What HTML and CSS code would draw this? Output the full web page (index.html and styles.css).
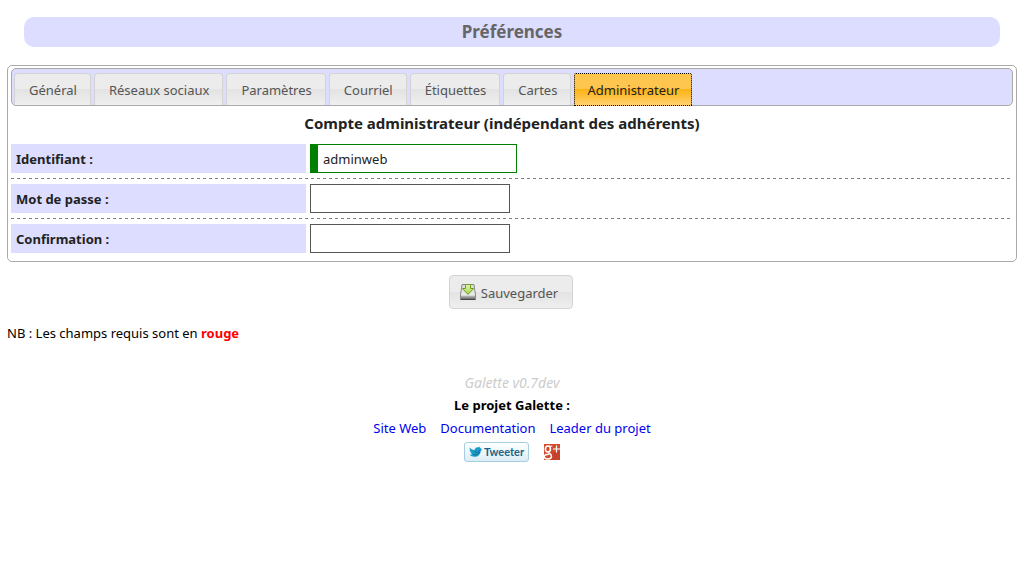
FILE: index.html
```html
<!DOCTYPE html>
<html lang="fr">
<head>
<meta charset="utf-8">
<title>Préférences</title>
<link rel="stylesheet" href="styles.css">
</head>
<body>
<h1 class="page-title">Préférences</h1>
<form class="prefs">
  <div class="panel">
    <div class="tabs" role="tablist">
      <button type="button" role="tab" class="tab">Général</button>
      <button type="button" role="tab" class="tab">Réseaux sociaux</button>
      <button type="button" role="tab" class="tab">Paramètres</button>
      <button type="button" role="tab" class="tab">Courriel</button>
      <button type="button" role="tab" class="tab">Étiquettes</button>
      <button type="button" role="tab" class="tab">Cartes</button>
      <button type="button" role="tab" class="tab tab-active" aria-selected="true">Administrateur</button>
    </div>
    <fieldset class="fields">
      <legend class="legend">Compte administrateur (indépendant des adhérents)</legend>
      <div class="row">
        <label class="label" for="login">Identifiant :</label>
        <input class="input input-valid" id="login" type="text" value="adminweb">
      </div>
      <div class="row">
        <label class="label" for="pass">Mot de passe :</label>
        <input class="input" id="pass" type="password">
      </div>
      <div class="row">
        <label class="label" for="confirm">Confirmation :</label>
        <input class="input" id="confirm" type="password">
      </div>
    </fieldset>
  </div>
  <div class="actions">
    <button type="submit" class="save">
      <svg width="16" height="16" viewBox="0 0 16 16" aria-hidden="true">
        <defs>
          <linearGradient id="disk" x1="0" y1="0" x2="0" y2="1"><stop offset="0" stop-color="#d8d8d6"/><stop offset="1" stop-color="#f4f4f2"/></linearGradient>
          <linearGradient id="front" x1="0" y1="0" x2="0" y2="1"><stop offset="0" stop-color="#c4c4c2"/><stop offset="1" stop-color="#6a6a68"/></linearGradient>
          <linearGradient id="arrow" x1="0" y1="0" x2="0" y2="1"><stop offset="0" stop-color="#e4f5b8"/><stop offset="1" stop-color="#a2d83c"/></linearGradient>
        </defs>
        <path d="M2 .5h12l1.500 10.500v4q0 .5-.5.500H1q-.5 0-.5-.5v-4z" fill="url(#disk)" stroke="#888a85"/>
        <path d="M1 11.500h14V15H1z" fill="url(#front)"/>
        <path d="M.5 15.500h15" stroke="#444643"/>
        <path d="M5.500.5h5v4h3L8 10.500 2.500 4.500h3z" fill="url(#arrow)" stroke="#6f9e22"/>
      </svg>
      <span>Sauvegarder</span>
    </button>
  </div>
</form>
<p class="note">NB : Les champs requis sont en <strong class="required">rouge</strong></p>
<footer class="footer">
  <p class="version">Galette v0.7dev</p>
  <p class="project">Le projet Galette :</p>
  <nav class="links">
    <a href="#site">Site Web</a>
    <a href="#doc">Documentation</a>
    <a href="#leader">Leader du projet</a>
  </nav>
  <div class="social">
    <a class="tweet" href="#tweet">
      <svg width="14" height="12" viewBox="0 0 14 12" aria-hidden="true">
        <path d="M.5 1.500C2 3 3.500 3.700 5.500 4 6 2 7.500.800 9.300 1.300l1.700-.8-.5 1.300 2 .2-1 1 2 .8-1.700.9C11.500 8.500 9 10.800 5.500 10.800 3.500 10.800 1.800 10 .5 8.800c1.200.1 2.200-.1 3-.7C2.300 7.700 1.600 7 1.300 6.200h1C1.200 5.500.5 4.600.5 3.700l1 .2C.6 3.200.3 2.300.5 1.500z" fill="#1c9bc9"/>
        <path d="M5.500 5.500c1.500 1.500 4.500 1 5.500-1.500M4 8.500c2.500 1 5.500.3 7-2.500" fill="none" stroke="#0f6f96"/>
      </svg>
      <span>Tweeter</span>
    </a>
    <a class="gplus" href="#gplus" aria-label="Google+">
      <svg width="16" height="16" viewBox="0 0 16 16" aria-hidden="true">
        <path d="M0 0h16v16H0z" fill="#d34b2d"/>
        <path d="M8 9l8-3v10H8z" fill="#c5402a"/>
        <path d="M8.300 2.200H4" stroke="#fff"/>
        <ellipse cx="3.900" cy="5" rx="2.500" ry="3" fill="none" stroke="#fff" stroke-width="1.600"/>
        <path d="M4.500 8.200c0 1.300 3 1.800 3 4.100 0 1.700-1.500 2.700-3.800 2.700S.2 14 .2 12.600C.2 11 2.200 10.200 5 10.200" fill="none" stroke="#fff" stroke-width="1.500"/>
        <path d="M12.500 1.500v7M9 5h7" stroke="#fff" stroke-width="1.200"/>
      </svg>
    </a>
  </div>
</footer>
</body>
</html>
```
FILE: styles.css
```css
* { box-sizing: border-box; }

body {
  margin: 0;
  padding: 17px 7px;
  background: #fff;
  color: #000;
  font: 13px/23px "Noto Sans", "Open Sans", sans-serif;
}

h1, p, fieldset, legend { margin: 0; padding: 0; border: 0; }
button, input { font: inherit; }

.page-title {
  margin: 0 17px 18px;
  border-radius: 10px;
  background: #ddf;
  color: #666;
  font-size: 17px;
  line-height: 30px;
  text-align: center;
}

.panel {
  padding: 2px 3px 8px;
  border: 1px solid #aaa;
  border-radius: 5px;
  color: #222;
}

.tabs {
  display: flex;
  gap: 3px;
  padding: 4px 2px 0;
  border: 1px solid #aaa;
  border-radius: 5px;
  background: #ddf;
}

.tab {
  height: 32px;
  padding: 2px 13px 0 14px;
  border: 1px solid #d3d3d3;
  border-bottom: 0;
  border-radius: 4px 4px 0 0;
  background: linear-gradient(#ececec 50%, #e3e3e3 50%, #efefef);
  color: #555;
  white-space: nowrap;
}

.tab-active {
  height: 33px;
  margin-bottom: -1px;
  padding: 1px 12px 0;
  border: 1px dotted #000;
  border-radius: 2px 2px 0 0;
  background: linear-gradient(#fec64f 50%, #fdb314 50%, #fed271);
  color: #222;
}

.legend {
  width: 100%;
  padding: 6px 20px 9px 0;
  font-size: 15px;
  font-weight: bold;
  text-align: center;
}

.row {
  display: flex;
  gap: 4px;
  margin-right: 2px;
  padding-bottom: 6px;
  background: repeating-linear-gradient(90deg, #808080 0 3px, transparent 3px 6px) bottom / 100% 1px no-repeat;
}

.row + .row { padding-top: 5px; }

.row:last-child {
  padding-bottom: 0;
  background: none;
}

.label {
  width: 295px;
  padding: 4px 5px 2px;
  background: #ddf;
  font-weight: bold;
}

.input {
  width: 200px;
  height: 29px;
  padding: 0 5px;
  border: 1px solid #555;
  border-radius: 0;
  outline: 0;
  background: #fff;
  color: #222;
}

.input-valid {
  width: 207px;
  border-color: green;
  border-left-width: 8px;
}

.actions {
  display: flex;
  justify-content: center;
  padding: 13px 2px 13px 0;
}

.save {
  display: flex;
  align-items: center;
  gap: 5px;
  height: 34px;
  padding: 0 14px 0 10px;
  border: 1px solid #d3d3d3;
  border-radius: 4px;
  background: linear-gradient(#ececec 50%, #e3e3e3 50%, #efefef);
  color: #555;
}

.save span { padding-top: 3px; }

.required { color: red; }

.footer {
  padding-top: 26px;
  text-align: center;
}

.version {
  color: #ccc;
  font-size: 14px;
  font-style: italic;
}

.project { font-weight: bold; }

.links {
  display: flex;
  justify-content: center;
  gap: 14px;
}

.links a {
  color: #00e;
  text-decoration: none;
}

.social {
  display: flex;
  justify-content: center;
  align-items: center;
  gap: 15px;
  padding-top: 2px;
}

.tweet {
  display: flex;
  align-items: center;
  justify-content: center;
  gap: 1px;
  width: 65px;
  height: 20px;
  border: 1px solid #a6cde0;
  border-radius: 3px;
  background: linear-gradient(#fff, #dcedf5);
  color: #186487;
  font: bold 11px/18px Lato, sans-serif;
  text-decoration: none;
}

.gplus { display: flex; }
```
